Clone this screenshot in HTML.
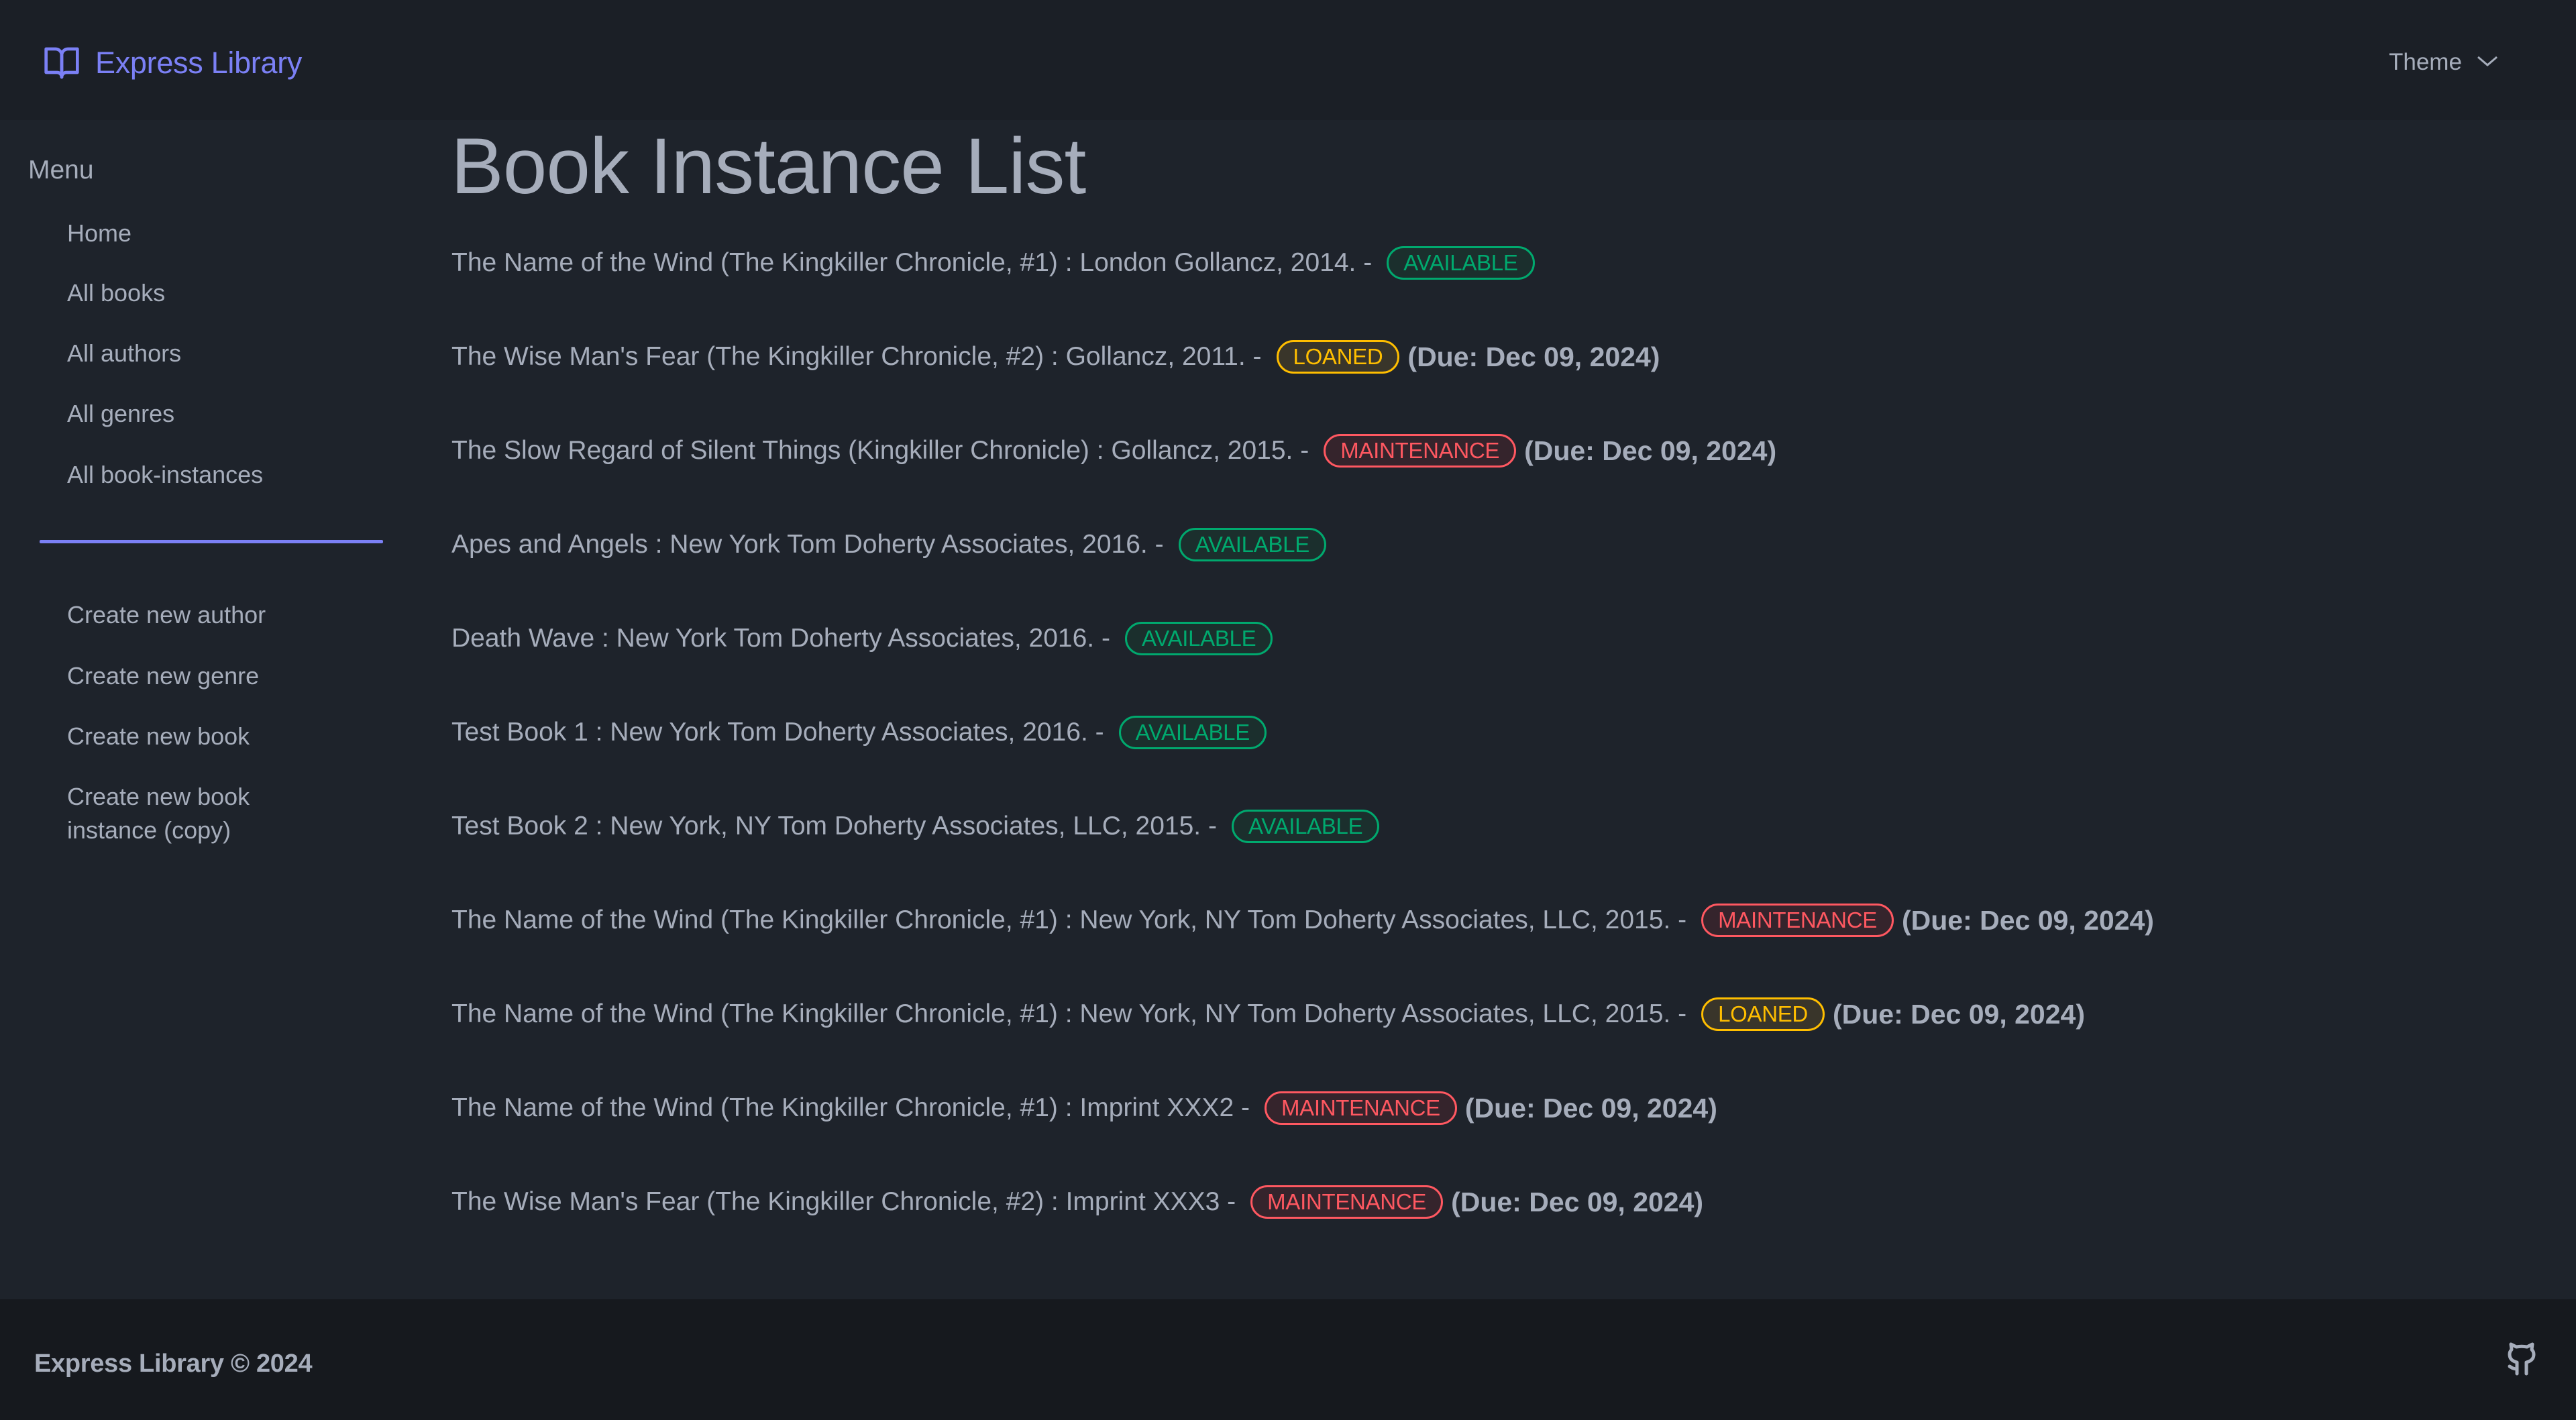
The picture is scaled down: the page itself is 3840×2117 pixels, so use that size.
<!DOCTYPE html>
<html><head><meta charset="utf-8"><style>
*{margin:0;padding:0;box-sizing:border-box}
html,body{width:3840px;height:2117px;overflow:hidden;background:#1e232b;font-family:"Liberation Sans",sans-serif;color:#a6adbb}
.hdr{position:absolute;left:0;top:0;width:3840px;height:179px;background:#1b1f26}
.logo{position:absolute;left:64px;top:66px;display:flex;align-items:center}
.logo span{font-size:45px;color:#7b80f5;margin-left:22px;letter-spacing:-0.3px}
.theme{position:absolute;left:3561px;top:73px;font-size:35px;color:#a6adbb}
.chev{position:absolute;left:3690px;top:80px}
.menu{position:absolute;left:42px;top:232px;font-size:39px}
.it{position:absolute;left:100px;font-size:36px;line-height:50px}
.div{position:absolute;left:59px;top:805px;width:512px;height:5px;background:#7b80f5;border-radius:2px}
h1{position:absolute;left:672px;top:180px;font-size:118px;font-weight:normal;letter-spacing:-1px;color:#a6adbb}
.row{position:absolute;left:673px;font-size:39px;display:flex;align-items:center;white-space:nowrap;height:60px}
.b{display:inline-block;border:3px solid;border-radius:30px;font-size:33px;height:50px;line-height:44px;padding:0 22px;margin-left:22px;letter-spacing:-0.3px}
.g{color:#00a96e;border-color:#00a96e;background:#1b2f2d}
.y{color:#ffbe00;border-color:#ffbe00;background:#39352a}
.r{color:#ff5861;border-color:#ff5861;background:#35242c}
.due{font-weight:bold;margin-left:12px;font-size:41px}
.ftr{position:absolute;left:0;top:1937px;width:3840px;height:180px;background:#16191e}
.ftr .t{position:absolute;left:51px;top:75px;font-size:38px;font-weight:bold;letter-spacing:-0.3px}
.gh{position:absolute;left:3726px;top:1994px}
</style></head><body>
<div class="hdr">
 <div class="logo"><svg width="56" height="56" viewBox="0 0 24 24" fill="none" stroke="#7b80f5" stroke-width="2" stroke-linejoin="round"><path d="M2 3h6a4 4 0 0 1 4 4v14a3 3 0 0 0-3-3H2z"/><path d="M22 3h-6a4 4 0 0 0-4 4v14a3 3 0 0 1 3-3h7z"/></svg><span>Express Library</span></div>
 <div class="theme">Theme</div>
 <svg class="chev" width="36" height="24" viewBox="0 0 36 24"><path d="M4 5l14 12 14-12" fill="none" stroke="#a6adbb" stroke-width="3"/></svg>
</div>
<div class="menu">Menu</div>
<div class="it" style="top:323px">Home</div>
<div class="it" style="top:412px">All books</div>
<div class="it" style="top:502px">All authors</div>
<div class="it" style="top:592px">All genres</div>
<div class="it" style="top:683px">All book-instances</div>
<div class="div"></div>
<div class="it" style="top:892px">Create new author</div>
<div class="it" style="top:983px">Create new genre</div>
<div class="it" style="top:1073px">Create new book</div>
<div class="it" style="top:1163px">Create new book<br>instance (copy)</div>
<h1>Book Instance List</h1>
<div class="row" style="top:362px">The Name of the Wind (The Kingkiller Chronicle, #1) : London Gollancz, 2014. -<span class="b g">AVAILABLE</span></div>
<div class="row" style="top:502px">The Wise Man's Fear (The Kingkiller Chronicle, #2) : Gollancz, 2011. -<span class="b y">LOANED</span><span class="due">(Due: Dec 09, 2024)</span></div>
<div class="row" style="top:642px">The Slow Regard of Silent Things (Kingkiller Chronicle) : Gollancz, 2015. -<span class="b r">MAINTENANCE</span><span class="due">(Due: Dec 09, 2024)</span></div>
<div class="row" style="top:782px">Apes and Angels : New York Tom Doherty Associates, 2016. -<span class="b g">AVAILABLE</span></div>
<div class="row" style="top:922px">Death Wave : New York Tom Doherty Associates, 2016. -<span class="b g">AVAILABLE</span></div>
<div class="row" style="top:1062px">Test Book 1 : New York Tom Doherty Associates, 2016. -<span class="b g">AVAILABLE</span></div>
<div class="row" style="top:1202px">Test Book 2 : New York, NY Tom Doherty Associates, LLC, 2015. -<span class="b g">AVAILABLE</span></div>
<div class="row" style="top:1342px">The Name of the Wind (The Kingkiller Chronicle, #1) : New York, NY Tom Doherty Associates, LLC, 2015. -<span class="b r">MAINTENANCE</span><span class="due">(Due: Dec 09, 2024)</span></div>
<div class="row" style="top:1482px">The Name of the Wind (The Kingkiller Chronicle, #1) : New York, NY Tom Doherty Associates, LLC, 2015. -<span class="b y">LOANED</span><span class="due">(Due: Dec 09, 2024)</span></div>
<div class="row" style="top:1622px">The Name of the Wind (The Kingkiller Chronicle, #1) : Imprint XXX2 -<span class="b r">MAINTENANCE</span><span class="due">(Due: Dec 09, 2024)</span></div>
<div class="row" style="top:1762px">The Wise Man's Fear (The Kingkiller Chronicle, #2) : Imprint XXX3 -<span class="b r">MAINTENANCE</span><span class="due">(Due: Dec 09, 2024)</span></div>
<div class="ftr"><div class="t">Express Library © 2024</div></div>
<svg class="gh" width="66" height="66" viewBox="0 0 66 66" fill="none" stroke="#a6adbb" stroke-width="5" stroke-linecap="round" stroke-linejoin="round"><path d="M26 54V37c-8-2-11-6-11-12 0-3 1-5 3-7l-1-8 8 4c5-1 11-1 16 0l8-4-1 8c2 2 3 4 3 7 0 6-3 10-11 12v17"/><path d="M26 47c-5 0-8-2-11-4"/></svg>
</body></html>
